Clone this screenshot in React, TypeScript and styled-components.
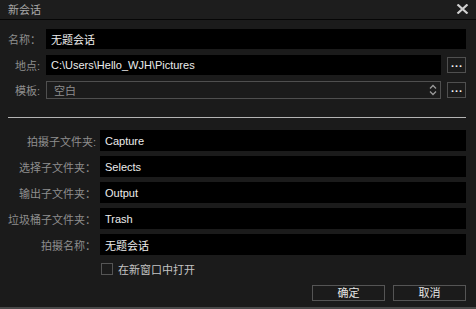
import React from 'react';
import styled, { createGlobalStyle } from 'styled-components';

const GlobalStyle = createGlobalStyle`
  html, body {
    margin: 0;
    padding: 0;
    background: #1b1b1b;
  }
  * { box-sizing: border-box; }
`;

const FONT = `"Liberation Sans", "Noto Sans CJK SC", sans-serif`;

const Window = styled.div`
  width: 476px;
  height: 309px;
  background: #1b1b1b;
  font-family: ${FONT};
  font-size: 11px;
  display: flex;
  flex-direction: column;
  border-bottom: 2px solid #4a4a4a;
  overflow: hidden;
`;

const TitleBar = styled.div`
  height: 20px;
  flex: none;
  display: flex;
  align-items: center;
  justify-content: space-between;
  padding: 0 7px 1px 8px;
  background: #1d1d1d;
  border-bottom: 1px solid #060606;
  color: #a8a8a8;
  font-size: 11px;
`;

const CloseButton = styled.button`
  width: 14px;
  height: 11px;
  padding: 0;
  border: 0;
  background: none;
  display: flex;
  align-items: center;
  justify-content: center;
`;

const Body = styled.div`
  flex: 1;
  display: flex;
  flex-direction: column;
  padding: 9px 10px 0 8px;
`;

const TopGrid = styled.div`
  display: grid;
  grid-template-columns: 32px 1fr 19px;
  column-gap: 6px;
  row-gap: 6px;
  align-items: center;
`;

const Label = styled.label<{ $width?: number }>`
  color: #8e8e8e;
  text-align: right;
  white-space: nowrap;
  ${({ $width }) => ($width ? `width: ${$width}px; flex: none;` : '')}
`;

const Field = styled.div<{ $span?: boolean; $h?: number }>`
  height: ${({ $h }) => $h ?? 20}px;
  background: #000;
  color: #ececec;
  display: flex;
  align-items: center;
  padding-left: 5px;
  white-space: nowrap;
  ${({ $span }) => ($span ? 'grid-column: 2 / 4;' : '')}
`;

const Select = styled.div`
  height: 18px;
  border: 1px solid #4f4f4f;
  display: flex;
  align-items: center;
  justify-content: space-between;
  padding: 0 3px 0 7px;
  color: #8e8e8e;
`;

const DotsButton = styled.button`
  width: 19px;
  height: 16px;
  padding: 0 0 3px 1px;
  border: 1px solid #4f4f4f;
  background: transparent;
  color: #f4f4f4;
  font-family: ${FONT};
  font-size: 11px;
  font-weight: bold;
  letter-spacing: 1px;
  line-height: 1;
  display: flex;
  align-items: flex-end;
  justify-content: center;
`;

const Separator = styled.div`
  height: 1px;
  background: #b4b4b4;
  margin: 18px 0 12px;
`;

const FormList = styled.div`
  display: flex;
  flex-direction: column;
  gap: 5px;
`;

const Row = styled.div`
  display: flex;
  align-items: center;
  gap: 4px;
`;

const Grow = styled.div`
  flex: 1;
`;

const CheckRow = styled.label`
  display: flex;
  align-items: center;
  gap: 5px;
  margin: 6px 0 0 93px;
  color: #c4c4c4;
`;

const Box = styled.span`
  width: 12px;
  height: 12px;
  border: 1px solid #555;
  flex: none;
`;

const Footer = styled.div`
  display: flex;
  justify-content: flex-end;
  gap: 8px;
  margin-top: 8px;
`;

const Button = styled.button`
  width: 73px;
  height: 16px;
  padding: 0;
  border: 1px solid #555;
  background: transparent;
  color: #e4e4e4;
  font-family: ${FONT};
  font-size: 11px;
  line-height: 14px;
`;

function Chevrons() {
  return (
    <svg width="8" height="12" viewBox="0 0 8 12">
      <path d="M1 4.5 L4 1.5 L7 4.5 M1 7.5 L4 10.5 L7 7.5" fill="none" stroke="#9a9a9a" strokeWidth="1.3" />
    </svg>
  );
}

function CloseIcon() {
  return (
    <svg width="13" height="10" viewBox="0 0 13 10">
      <path d="M1.5 0.5 L11.5 9.5 M11.5 0.5 L1.5 9.5" stroke="#d0d0d0" strokeWidth="2.2" />
    </svg>
  );
}

const subFolders = [
  { label: '拍摄子文件夹:', value: 'Capture' },
  { label: '选择子文件夹：', value: 'Selects' },
  { label: '输出子文件夹：', value: 'Output' },
  { label: '垃圾桶子文件夹：', value: 'Trash' },
  { label: '拍摄名称：', value: '无题会话' },
];

export default function App() {
  return (
    <>
      <GlobalStyle />
      <Window>
        <TitleBar>
          <span>新会话</span>
          <CloseButton><CloseIcon /></CloseButton>
        </TitleBar>
        <Body>
          <TopGrid>
            <Label>名称：</Label>
            <Field $span>无题会话</Field>
            <Label>地点:</Label>
            <Field>C:\Users\Hello_WJH\Pictures</Field>
            <DotsButton>...</DotsButton>
            <Label>模板:</Label>
            <Select>
              <span>空白</span>
              <Chevrons />
            </Select>
            <DotsButton>...</DotsButton>
          </TopGrid>

          <Separator />

          <FormList>
            {subFolders.map((f) => (
              <Row key={f.label}>
                <Label $width={88}>{f.label}</Label>
                <Grow>
                  <Field $h={21}>{f.value}</Field>
                </Grow>
              </Row>
            ))}
          </FormList>

          <CheckRow>
            <Box />
            <span>在新窗口中打开</span>
          </CheckRow>

          <Footer>
            <Button>确定</Button>
            <Button>取消</Button>
          </Footer>
        </Body>
      </Window>
    </>
  );
}
